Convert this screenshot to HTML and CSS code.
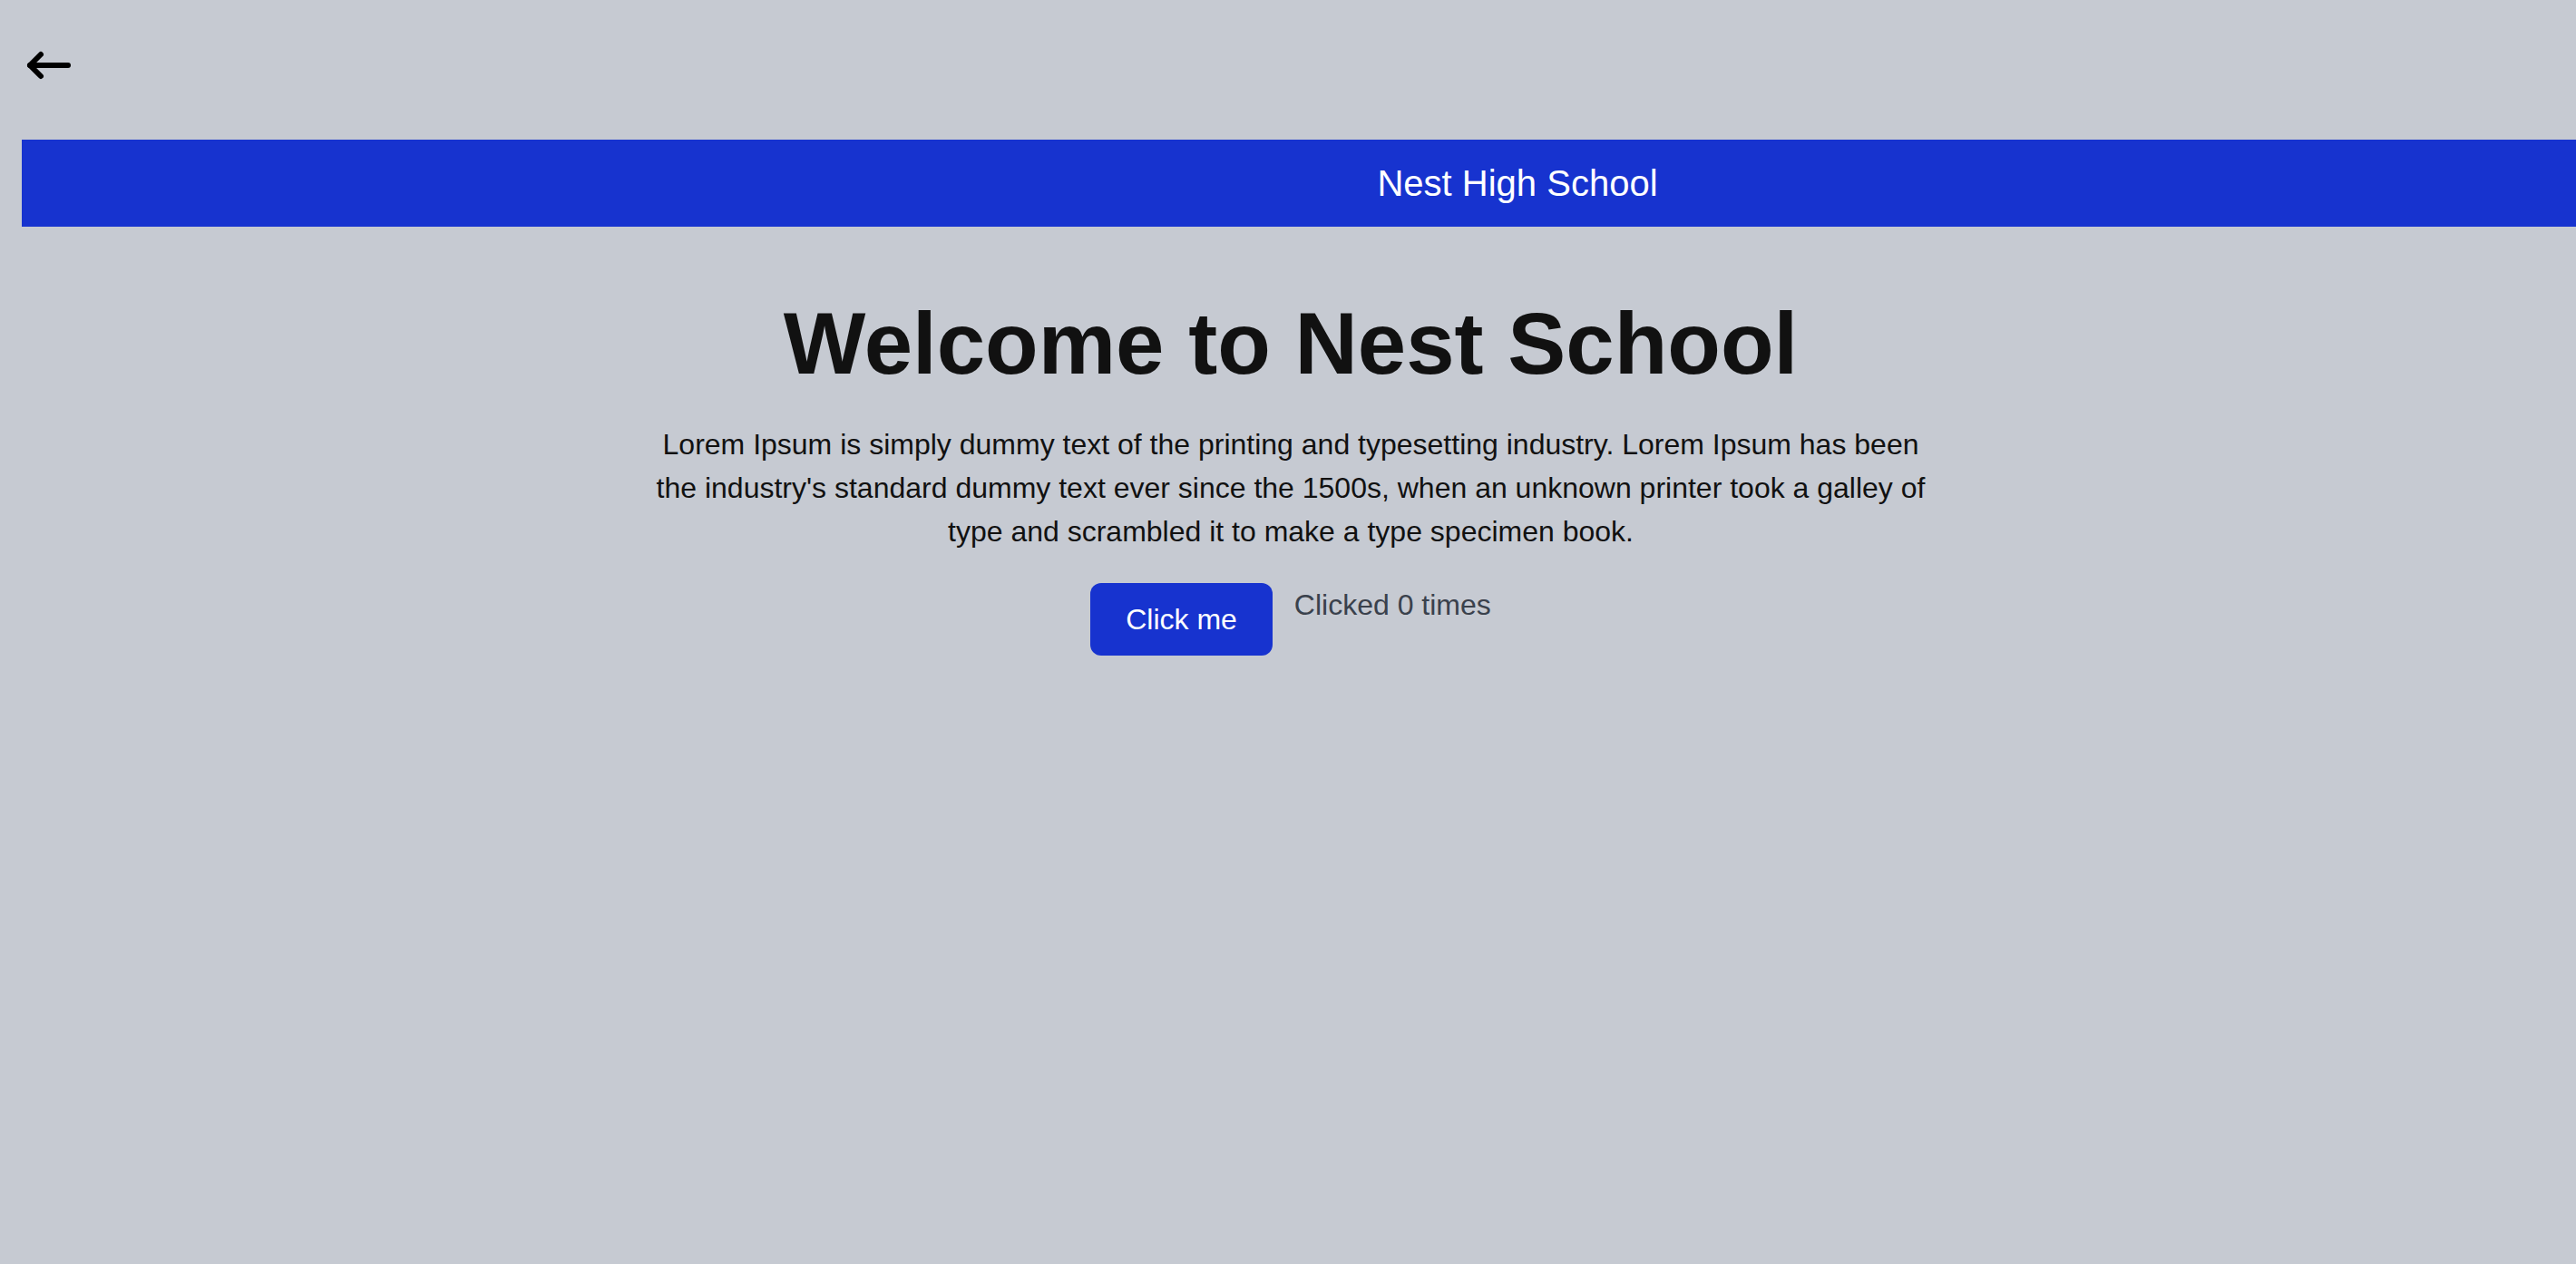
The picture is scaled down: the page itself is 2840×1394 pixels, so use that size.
FILE: index.html
```html
<!DOCTYPE html>
<html lang="en">
<head>
<meta charset="utf-8">
<title>Nest School</title>
<link rel="stylesheet" href="styles.css">
</head>
<body>
<div class="page">
  <nav class="topbar">
    <a class="back" href="#" aria-label="Back">
      <svg width="56" height="36" viewBox="0 0 56 36" fill="none" stroke="#000" stroke-width="6" stroke-linecap="round" stroke-linejoin="round">
        <path d="M48 18H6"/>
        <path d="M18 6L6 18L18 30"/>
      </svg>
    </a>
  </nav>
  <header class="banner">
    <span class="banner-title">Nest High School</span>
  </header>
  <main class="hero">
    <h1 class="hero-title">Welcome to Nest School</h1>
    <p class="hero-text">Lorem Ipsum is simply dummy text of the printing and typesetting industry. Lorem Ipsum has been the industry's standard dummy text ever since the 1500s, when an unknown printer took a galley of type and scrambled it to make a type specimen book.</p>
    <div class="actions">
      <button class="btn" type="button">Click me</button>
      <span class="counter">Clicked 0 times</span>
    </div>
  </main>
</div>
</body>
</html>
```

FILE: styles.css
```css
html, body {
  margin: 0;
  padding: 0;
}

body {
  background: #c6cad2;
  font-family: "Liberation Sans", Arial, sans-serif;
  color: #111111;
  min-height: 1394px;
}

.page {
  display: flex;
  flex-direction: column;
}

.topbar {
  height: 154px;
  box-sizing: border-box;
  padding: 54px 0 0 27px;
}

.back {
  display: inline-block;
  line-height: 0;
}

.banner {
  margin-left: 24px;
  height: 96px;
  background: #1733cf;
  display: flex;
  align-items: center;
  justify-content: center;
  padding-left: 482px;
}

.banner-title {
  color: #ffffff;
  font-size: 40px;
}

.hero {
  display: flex;
  flex-direction: column;
  align-items: center;
  padding: 74px 0 0 6px;
}

.hero-title {
  margin: 0;
  font-size: 96px;
  line-height: 110px;
  font-weight: 700;
  color: #111111;
}

.hero-text {
  margin: 32px 0 0;
  max-width: 1420px;
  font-size: 32px;
  line-height: 48px;
  text-align: center;
  color: #111111;
}

.actions {
  margin-top: 33px;
  display: flex;
  align-items: flex-start;
  gap: 24px;
}

.btn {
  background: #1733cf;
  color: #ffffff;
  border: none;
  border-radius: 12px;
  font-family: "Liberation Sans", Arial, sans-serif;
  font-size: 32px;
  line-height: 48px;
  padding: 16px 39px;
  cursor: pointer;
}

.counter {
  font-size: 32px;
  line-height: 48px;
  color: #3a414c;
}
```
